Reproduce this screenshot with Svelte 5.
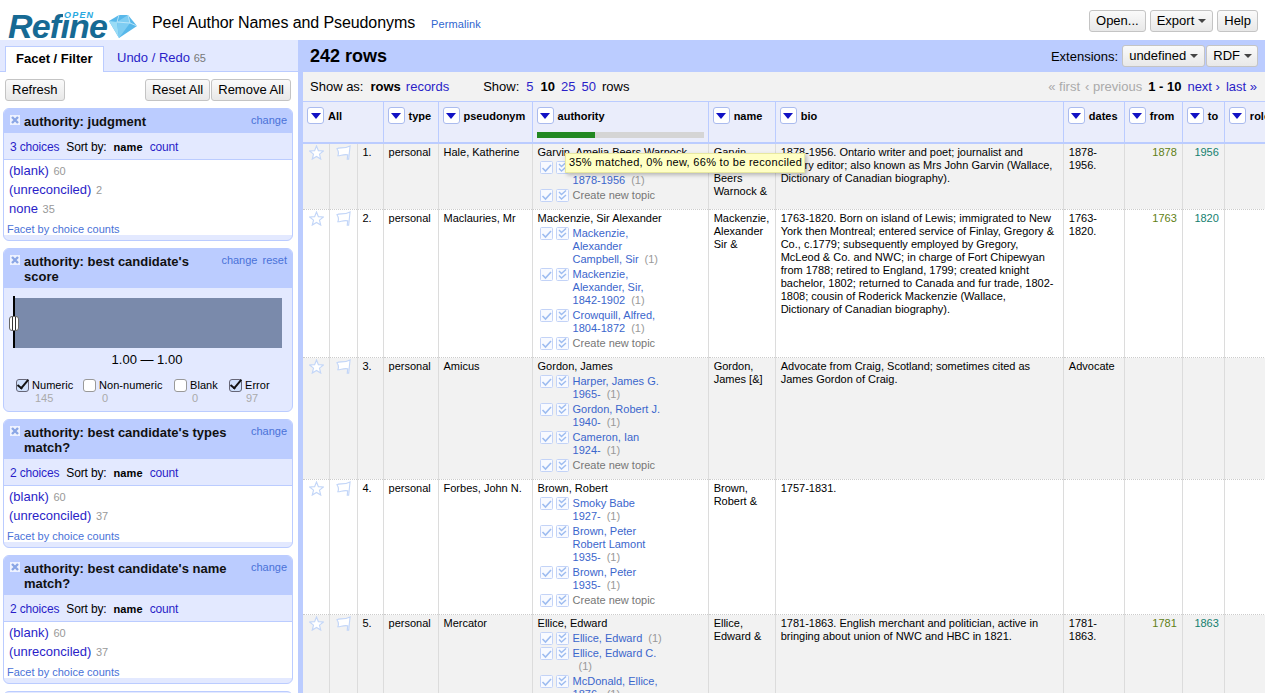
<script>
  const facets = [
    { title: "authority: judgment", choices: "3 choices", items: [["(blank)", 60], ["(unreconciled)", 2], ["none", 35]] },
    { title: "authority: best candidate's types match?", choices: "2 choices", items: [["(blank)", 60], ["(unreconciled)", 37]] },
    { title: "authority: best candidate's name match?", choices: "2 choices", items: [["(blank)", 60], ["(unreconciled)", 37]] }
  ];
  const cols = [
    ["type", 55], ["pseudonym", 94], ["authority", 176], ["name", 67], ["bio", 288], ["dates", 61], ["from", 58], ["to", 42], ["role", 60]
  ];
  const rows = [
    { n: 1, p: "Hale, Katherine", a: "Garvin, Amelia Beers Warnock", c: ["Garvin, Amelia,\n1878-1956"], name: "Garvin, Amelia Beers Warnock &", bio: "1878-1956. Ontario writer and poet; journalist and literary editor; also known as Mrs John Garvin (Wallace, Dictionary of Canadian biography).", d: "1878-1956.", f: "1878", t: "1956", fc: "#5f7f14", tc: "#14806f" },
    { n: 2, p: "Maclauries, Mr", a: "Mackenzie, Sir Alexander", c: ["Mackenzie,\nAlexander\nCampbell, Sir", "Mackenzie,\nAlexander, Sir,\n1842-1902", "Crowquill, Alfred,\n1804-1872"], name: "Mackenzie, Alexander Sir &", bio: "1763-1820. Born on island of Lewis; immigrated to New York then Montreal; entered service of Finlay, Gregory & Co., c.1779; subsequently employed by Gregory, McLeod & Co. and NWC; in charge of Fort Chipewyan from 1788; retired to England, 1799; created knight bachelor, 1802; returned to Canada and fur trade, 1802-1808; cousin of Roderick Mackenzie (Wallace, Dictionary of Canadian biography).", d: "1763-1820.", f: "1763", t: "1820", fc: "#5f7f14", tc: "#14806f" },
    { n: 3, p: "Amicus", a: "Gordon, James", c: ["Harper, James G.\n1965-", "Gordon, Robert J.\n1940-", "Cameron, Ian\n1924-"], name: "Gordon, James [&]", bio: "Advocate from Craig, Scotland; sometimes cited as James Gordon of Craig.", d: "Advocate", f: "", t: "" },
    { n: 4, p: "Forbes, John N.", a: "Brown, Robert", c: ["Smoky Babe\n1927-", "Brown, Peter\nRobert Lamont\n1935-", "Brown, Peter\n1935-"], name: "Brown, Robert &", bio: "1757-1831.", d: "", f: "", t: "" },
    { n: 5, p: "Mercator", a: "Ellice, Edward", c: ["Ellice, Edward", "Ellice, Edward C.", "McDonald, Ellice,\n1876-"], name: "Ellice, Edward &", bio: "1781-1863. English merchant and politician, active in bringing about union of NWC and HBC in 1821.", d: "1781-1863.", f: "1781", t: "1863", fc: "#5f7f14", tc: "#14806f" }
  ];
</script>

{#snippet arrow()}
  <span class="dd"><svg width="10" height="6" viewBox="0 0 10 6"><path d="M0 0H10L5 6Z" fill="#1111c4"/></svg></span>
{/snippet}

{#snippet remove()}
  <svg class="x" width="10" height="10" viewBox="0 0 10 10"><rect width="10" height="10" fill="#eef2ff"/><path d="M2 2L8 8M8 2L2 8" stroke="#8aa6e6" stroke-width="2.4"/></svg>
{/snippet}

{#snippet check(double)}
  <svg class="chk" width="13" height="13" viewBox="0 0 13 13"><rect x=".5" y=".5" width="12" height="12" rx="1" fill="#f8faff" stroke="#c3d3f7"/>{#if double}<path d="M3 3l2.500 2.500L10 1.500M3 7.500l2.500 2.500L10 6" fill="none" stroke="#9dbcf0" stroke-width="1.400"/>{:else}<path d="M2.500 7l3 3L11 4" fill="none" stroke="#9dbcf0" stroke-width="1.600"/>{/if}</svg>
{/snippet}

{#snippet facetBox(f)}
  <div class="facet">
    <div class="fhead">
      {@render remove()}
      <span class="ftitle">{f.title}</span>
      <span class="flinks"><a>change</a></span>
    </div>
    <div class="fsort"><a class="lk">{f.choices}</a><span>Sort by:</span><b>name</b><a class="lk">count</a></div>
    <div class="fbody">
      {#each f.items as it}
        <div class="fitem"><a class="lk">{it[0]}</a> <span class="cnt">{it[1]}</span></div>
      {/each}
      <div class="fby"><a>Facet by choice counts</a></div>
    </div>
  </div>
{/snippet}

<div class="app">
  <header>
    <div class="logo">
      <span class="refine">Refine</span><span class="open">OPEN</span>
      <svg class="gem" width="30" height="24" viewBox="0 0 30 24"><path d="M1 6L11 0H20L29 11L11 23Z" fill="#58b8ea"/><path d="M1 6L9 7L11 23Z" fill="#9adcf6"/><path d="M9 7L20 0L22 8L11 23Z" fill="#7fcdf2"/><path d="M9 7L22 8L29 11M11 0L9 7M20 0L22 8" fill="none" stroke="#c9ecfb" stroke-width=".8"/></svg>
    </div>
    <div class="title">Peel Author Names and Pseudonyms</div>
    <a class="perma">Permalink</a>
    <div class="hbtns">
      <button>Open...</button>
      <button>Export <i></i></button>
      <button>Help</button>
    </div>
  </header>
  <div class="main">
    <aside>
      <div class="tabs">
        <div class="tab on">Facet / Filter</div>
        <div class="tab"><a class="lk">Undo / Redo</a> <span class="tabn">65</span></div>
      </div>
      <div class="pane">
        <div class="actions">
          <button>Refresh</button>
          <div class="grp"><button>Reset All</button><button>Remove All</button></div>
        </div>
        {@render facetBox(facets[0])}
        <div class="facet">
          <div class="fhead">
            {@render remove()}
            <span class="ftitle">authority: best candidate's score</span>
            <span class="flinks"><a>change</a> <a>reset</a></span>
          </div>
          <div class="rbody">
            <div class="hist"><span class="handle"></span></div>
            <div class="rval">1.00 — 1.00</div>
            <div class="rchecks">
              <div class="rc w1"><label><span class="cb on"></span>Numeric</label><em>145</em></div>
              <div class="rc w2"><label><span class="cb"></span>Non-numeric</label><em>0</em></div>
              <div class="rc w3"><label><span class="cb"></span>Blank</label><em>0</em></div>
              <div class="rc w4"><label><span class="cb on"></span>Error</label><em>97</em></div>
            </div>
          </div>
        </div>
        {@render facetBox(facets[1])}
        {@render facetBox(facets[2])}
        <div class="facet stub"></div>
      </div>
    </aside>
    <section>
      <div class="vhead">
        <div class="count">242 rows</div>
        <div class="ext">
          <span>Extensions:</span>
          <div class="grp"><button>undefined <i></i></button><button>RDF <i></i></button></div>
        </div>
      </div>
      <div class="vopts">
        <span class="lab">Show as:</span><b class="m7">rows</b><a class="lk m5">records</a>
        <span class="lab show">Show:</span><a class="lk m7">5</a><b class="m7">10</b><a class="lk m6">25</a><a class="lk m6">50</a><span class="m6">rows</span>
        <div class="pager"><span class="dim first">« first</span><span class="dim">‹ previous</span><b>1 - 10</b><a class="lk">next ›</a><a class="lk">last »</a></div>
      </div>
      <div class="tablewrap">
        <table>
          <colgroup>
            <col class="c1"/><col class="c2"/><col class="c3"/>
            {#each cols as c}<col style="width:{c[1]}px"/>{/each}
          </colgroup>
          <thead>
            <tr>
              <th colspan="3"><div class="th">{@render arrow()}<span>All</span></div></th>
              {#each cols as c}
                <th>
                  <div class="th">{@render arrow()}<span>{c[0]}</span></div>
                  {#if c[0] === "authority"}<div class="prog"><span></span></div>{/if}
                </th>
              {/each}
            </tr>
          </thead>
          <tbody>
            {#each rows as r, i}
              <tr class:odd={i % 2 === 0}>
                <td class="ic"><svg width="15" height="15" viewBox="0 0 16 16"><path d="M8 1l2 5 5.300.4-4.100 3.400 1.300 5.200L8 12.200 3.500 15l1.300-5.200L.7 6.400 6 6z" fill="#fff" stroke="#c3d6f8" stroke-width="1.200"/></svg></td>
                <td class="ic"><svg width="15" height="15" viewBox="0 0 16 16"><path d="M1 4C4 2 8 4.500 15 1L13.500 15H12L12.500 10.500C8.500 9.500 5 11.500 2 11.500 3 9 2.500 6 1 4Z" fill="#fff" stroke="#c3d6f8" stroke-width="1.200"/></svg></td>
                <td>{r.n}.</td>
                <td>personal</td>
                <td>{r.p}</td>
                <td>
                  <div>{r.a}</div>
                  {#each r.c as c}
                    <div class="cand">
                      {@render check(false)}{@render check(true)}
                      <div class="ctext"><a>{c}</a><span class="cn">(1)</span></div>
                    </div>
                  {/each}
                  {#if i < 4}
                    <div class="cand">
                      {@render check(false)}{@render check(true)}
                      <div class="ctext new">Create new topic</div>
                    </div>
                  {/if}
                </td>
                <td>{r.name}</td>
                <td>{r.bio}</td>
                <td>{r.d}</td>
                <td class="num" style="color:{r.fc}">{r.f}</td>
                <td class="num" style="color:{r.tc}">{r.t}</td>
                <td></td>
              </tr>
            {/each}
          </tbody>
        </table>
        <div class="tip">35% matched, 0% new, 66% to be reconciled</div>
      </div>
    </section>
  </div>
</div>

<style>
  :global(body) { margin: 0; background: #fff; font-family: "Liberation Sans", Arial, sans-serif; font-size: 13px; color: #000; }
  .app { width: 1265px; height: 693px; overflow: hidden; display: flex; flex-direction: column; }
  a { text-decoration: none; color: #3b6fd6; cursor: pointer; }
  .lk { color: #2a1ec8; }
  header { height: 40px; flex: none; display: flex; align-items: center; position: relative; }
  .logo { width: 152px; height: 40px; flex: none; position: relative; }
  .refine { position: absolute; left: 8px; top: 10px; font: italic bold 34px/32px "Liberation Sans", sans-serif; letter-spacing: -.8px; color: #166a94; }
  .open { position: absolute; left: 63px; top: 11px; font: italic bold 9px/9px "Liberation Sans", sans-serif; letter-spacing: 1.200px; color: #2aa9e0; background: #fff; padding: 0 1px; }
  .gem { position: absolute; left: 108px; top: 15px; }
  .title { font-size: 16px; margin-top: 5px; letter-spacing: -.09px; }
  .perma { font-size: 11px; margin-left: 16px; margin-top: 8px; color: #2f66d0; letter-spacing: .1px; }
  .hbtns { margin-left: auto; display: flex; gap: 4px; padding-right: 7px; margin-top: 2px; }
  button { font: 13px/20px "Liberation Sans", sans-serif; height: 22px; padding: 0 6px; border: 1px solid #c4c4c4; border-radius: 3px; background: linear-gradient(#fafafa, #e8e8e8); color: #000; display: inline-flex; align-items: center; gap: 3px; }
  button i { width: 0; height: 0; border-style: solid; border-color: #444 transparent transparent; border-width: 4px 4px 0; margin-left: 1px; }
  .grp { display: flex; }
  .grp button + button { margin-left: 1px; }
  .ext .grp button + button { padding-right: 5px; }
  .main { flex: 1; display: flex; min-height: 0; }
  aside { width: 303px; flex: none; border-right: 5px solid #bbccff; box-sizing: border-box; overflow: hidden; }
  .tabs { height: 32px; background: #e3e9ff; border-bottom: 1px solid #bbccff; box-sizing: border-box; display: flex; padding: 6px 0 0 5px; }
  .tab { padding: 0 0 0 13px; font-size: 13px; line-height: 24px; }
  .tab.on { background: #fff; border: 1px solid #bbccff; border-bottom: 0; height: 26px; box-sizing: border-box; font-weight: bold; padding: 0 10px; width: 99px; white-space: nowrap; }
  .tabn { color: #777; font-size: 11px; }
  .pane { padding: 7px 5px 0 3px; }
  .actions { display: flex; justify-content: space-between; margin: 0 2px 7px 2px; }
  .facet { border: 1px solid #bbccff; border-radius: 6px; background: #e3e9ff; margin-bottom: 7px; overflow: hidden; padding-bottom: 5px; }
  .fhead { background: #bbccff; display: flex; padding: 5px 5px 4px 6px; align-items: flex-start; }
  .x { flex: none; margin: 1px 4px 0 0; }
  .ftitle { flex: 1; font-size: 13px; font-weight: bold; line-height: 15px; color: #111; }
  .flinks { flex: none; font-size: 11px; line-height: 13px; white-space: nowrap; margin-left: 4px; }
  .flinks a { margin-left: 2px; color: #4a72d8; }
  .fsort { height: 27px; display: flex; align-items: center; gap: 7px; padding: 1px 0 0 6px; border-bottom: 1px solid #bbccff; box-sizing: border-box; font-size: 12px; letter-spacing: -.15px; }
  .fsort b { font-size: 11px; letter-spacing: .1px; }
  .fbody { background: #fff; padding: 1px 0 0; }
  .fitem { padding-left: 5px; height: 19px; line-height: 19px; font-size: 13px; }
  .cnt { color: #999; font-size: 11px; margin-left: 1px; }
  .fby { font-size: 11px; padding: 5px 3px 0; height: 12px; line-height: 13px; }
  .fby a { color: #4a72d8; }
  .rbody { padding: 10px 0 0; height: 108px; }
  .hist { height: 50px; margin: 0 10px 0 9px; position: relative; background: #7a8aab; border-left: 2px solid #000; }
  .hist::before { content: ""; position: absolute; left: -2px; top: -2px; width: 2px; height: 2px; background: #000; }
  .handle { position: absolute; left: -6px; top: 18px; width: 8px; height: 13px; border: 1px solid #666; border-radius: 3px; background: #fff linear-gradient(90deg, #fff 2px, #333 2px, #333 3px, #fff 3px, #fff 5px, #333 5px, #333 6px, #fff 6px); }
  .rval { text-align: center; font-size: 13px; line-height: 14px; margin: 5px 0 0; padding-right: 2px; }
  .rchecks { position: relative; height: 30px; margin-top: 11px; font-size: 11px; }
  .rc { position: absolute; top: 0; }
  .rc label { display: flex; align-items: center; gap: 3px; white-space: nowrap; height: 14px; letter-spacing: .05px; }
  .rc em { font-style: normal; color: #aaa; display: block; line-height: 13px; }
  .w1 { left: 12px; } .w2 { left: 79px; } .w3 { left: 170px; } .w4 { left: 225px; }
  .w1 em { padding-left: 19px; } .w2 em { padding-left: 19px; } .w3 em { padding-left: 18px; } .w4 em { padding-left: 17px; }
  .cb { display: inline-block; width: 11px; height: 11px; border: 1px solid #999; border-radius: 3px; background: #fff; position: relative; }
  .cb.on { background: #cfe0fb; border-color: #667; }
  .cb.on::after { content: ""; position: absolute; left: 3px; top: -3px; width: 4px; height: 10px; border: solid #111; border-width: 0 2px 2px 0; transform: rotate(40deg); }
  section { flex: 1; min-width: 0; display: flex; flex-direction: column; }
  .vhead { height: 32px; flex: none; background: #bbccff; display: flex; align-items: center; padding: 0 7px 0 4px; }
  .count { font-size: 18px; font-weight: bold; margin-left: 3px; }
  .ext { margin-left: auto; display: flex; align-items: center; gap: 4px; }
  .vopts { height: 29px; flex: none; background: #f2f2f2; display: flex; align-items: center; padding: 0 8px 0 7px; }
  .m7 { margin-left: 7px; } .m5 { margin-left: 5px; } .m6 { margin-left: 6px; }
  .show { margin-left: 34px; }
  .pager { margin-left: auto; display: flex; gap: 6px; }
  .first { margin-right: -1px; }
  .dim { color: #aaa; }
  .tablewrap { flex: 1; position: relative; overflow: hidden; }
  table { border-collapse: collapse; table-layout: fixed; width: 982px; font-size: 11px; line-height: 13px; }
  .c1 { width: 26px; } .c2 { width: 28px; } .c3 { width: 26px; }
  th { background: #eaedfb; border: 1px solid #bbccff; border-bottom-width: 2px; height: 35px; vertical-align: top; padding: 5px 4px 0 4px; text-align: left; font-size: 11px; overflow: hidden; white-space: nowrap; }
  th:first-child { border-left: 0; }
  .th { display: flex; align-items: center; gap: 4px; }
  .th span:last-child { margin-top: 1px; }
  .dd { width: 17px; height: 17px; flex: none; box-sizing: border-box; background: #fff; border: 1px solid #aabbee; border-radius: 3px; display: flex; align-items: center; justify-content: center; }
  .prog { height: 6px; margin-top: 8px; background: #d5d5d5; }
  .prog span { display: block; width: 35%; height: 100%; background: #228822; }
  td { border-left: 1px solid #dcdcdc; border-right: 1px solid #dcdcdc; border-top: 1px dotted #ccc; vertical-align: top; padding: 2px 7px 7px 5px; background: #fff; overflow: hidden; }
  td:first-child { border-left: 0; }
  tr.odd td { background: #f2f2f2; }
  td.ic { padding: 0 0 0 6px; }
  td.ic svg { display: block; margin-top: 1px; }
  td.num { text-align: right; padding-right: 5px; }
  .cand { display: flex; align-items: flex-start; gap: 3px; margin-left: 2px; margin-top: 2px; }
  .chk { flex: none; }
  .ctext { width: 97px; margin-left: 1px; color: #666; }
  .ctext a { color: #3b66cc; white-space: pre-line; }
  .cn { color: #999; margin-left: 6px; }
  .ctext.new { width: auto; color: #777; white-space: nowrap; }
  .tip { position: absolute; left: 262px; top: 52px; background: #ffffc4; border: 1px solid #e8e8a0; box-shadow: 2px 2px 4px rgba(0,0,0,.25); font-size: 11px; line-height: 13px; padding: 2px 2px 3px 3px; white-space: nowrap; letter-spacing: .3px; }
  .stub { height: 30px; }
</style>
